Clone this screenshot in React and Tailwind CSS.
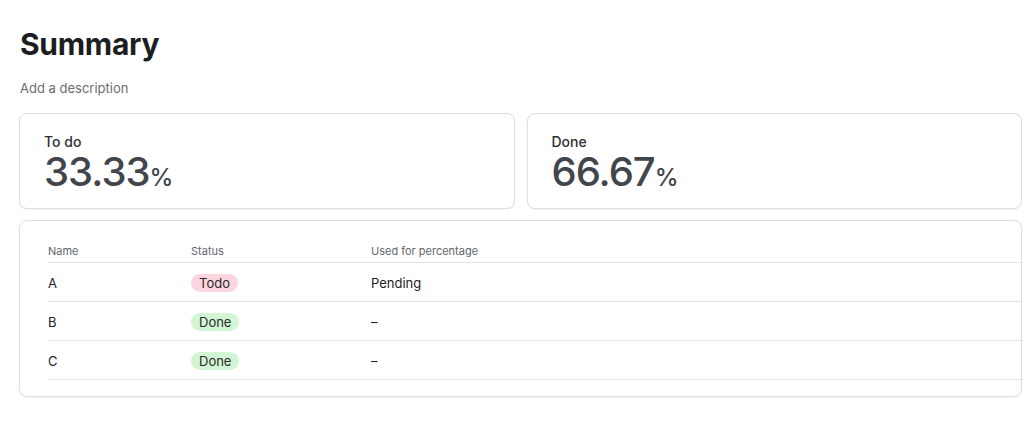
const rows = [
  { name: "A", status: "Todo", used: "Pending" },
  { name: "B", status: "Done", used: "–" },
  { name: "C", status: "Done", used: "–" },
];

const StatCard = ({ label, value }) => (
  <div className="flex-1 rounded-lg border border-[#dedede] bg-white pl-6 pt-[18px] pb-4 shadow-[0_1px_2px_rgba(0,0,0,0.05)]">
    <div className="text-[14px] leading-5 font-medium text-[#2c2e33]">{label}</div>
    <div className="text-[40px] leading-[40px] font-medium text-[#42454c] tracking-[-1px]">
      {value}
      <span className="text-[24px] leading-none tracking-normal">%</span>
    </div>
  </div>
);

const Badge = ({ status }) => (
  <span
    className={
      status === "Todo"
        ? "inline-block rounded-full bg-[#fdd5df] px-2 text-[13px] leading-[18px] text-[#2a2a2a]"
        : "inline-block rounded-full bg-[#d2f5d4] px-2 text-[13px] leading-[18px] text-[#2a2a2a]"
    }
  >
    {status}
  </span>
);

export default function App() {
  return (
    <div
      className="min-h-screen bg-white pl-[19px] pr-3 pt-[26px]"
      style={{ fontFamily: "Inter, 'Noto Sans', sans-serif" }}
    >
      <h1 className="pl-[1px] text-[30px] leading-9 font-bold text-[#1d1e22] tracking-[-0.3px]">
        Summary
      </h1>
      <p className="mt-[16px] pl-[1px] text-[13px] leading-5 text-[#6b6d72]">Add a description</p>

      <div className="mt-[15px] flex gap-3">
        <StatCard label="To do" value="33.33" />
        <StatCard label="Done" value="66.67" />
      </div>

      <div className="mt-[11px] rounded-lg border border-[#dedede] bg-white pt-4 pb-4 pl-7 shadow-[0_1px_2px_rgba(0,0,0,0.05)]">
        <table className="w-full border-collapse text-left">
          <thead>
            <tr className="border-b border-[#e3e3e3]">
              <th className="w-[143px] h-[25px] pt-[4px] align-middle text-[11px] font-normal text-[#62656b]">Name</th>
              <th className="w-[180px] pt-[4px] align-middle text-[11px] font-normal text-[#62656b]">Status</th>
              <th className="pt-[4px] align-middle text-[11px] font-normal text-[#62656b]">Used for percentage</th>
            </tr>
          </thead>
          <tbody>
            {rows.map((r) => (
              <tr key={r.name} className="border-b border-[#e3e3e3]">
                <td className="h-[39px] pt-[5px] align-middle text-[13px] text-[#1f2126]">{r.name}</td>
                <td className="align-middle">
                  <Badge status={r.status} />
                </td>
                <td className="pt-[5px] align-middle text-[13px] text-[#1f2126]">{r.used}</td>
              </tr>
            ))}
          </tbody>
        </table>
      </div>
    </div>
  );
}
